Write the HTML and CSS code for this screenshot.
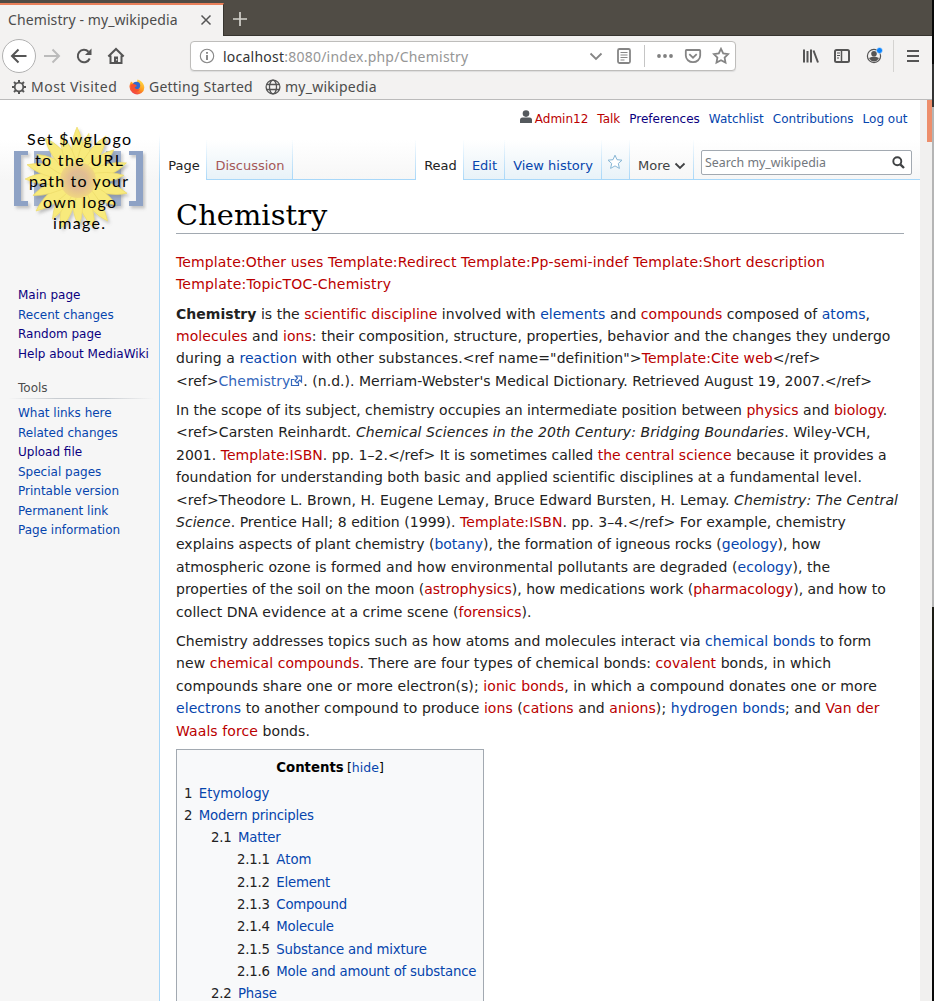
FILE: index.html
```html
<!DOCTYPE html>
<html lang="en">
<head>
<meta charset="utf-8">
<title>Chemistry - my_wikipedia</title>
<link rel="stylesheet" href="styles.css">
</head>
<body>
<div class="desktop">
<div class="window">
  <header class="tabstrip">
    <div class="browser-tab"><span class="tab-title">Chemistry - my_wikipedia</span>
      <svg class="tab-close" width="12" height="12" viewBox="0 0 12 12"><path d="M1.500 1.500l9 9M10.500 1.500l-9 9" stroke="#555" stroke-width="1.500"/></svg>
    </div>
    <svg class="new-tab" width="16" height="16" viewBox="0 0 16 16"><path d="M8 1v14M1 8h14" stroke="#d5d3cd" stroke-width="1.700"/></svg>
  </header>
  <div class="toolbar">
    <span class="back"><svg width="18" height="18" viewBox="0 0 18 18"><path d="M16.500 9H2M8.500 2.500L2 9l6.500 6.500" class="ink w2"/></svg></span>
    <svg class="fwd" width="18" height="18" viewBox="0 0 18 18"><path d="M1 9h15M9.500 2.500L16 9l-6.500 6.500" fill="none" stroke="#bbb" stroke-width="2"/></svg>
    <svg class="reload" width="18" height="18" viewBox="0 0 18 18"><path d="M14.700 11.500A6.200 6.200 0 1 1 13.500 4.800" class="ink w2"/><path d="M16.500 1.500v6.500h-6.500z" fill="#555"/></svg>
    <svg class="home" width="18" height="18" viewBox="0 0 18 18"><path d="M1.300 9.500L9 2l7.700 7.500M3.500 8.500v7.500h11V8.500" class="ink w2"/><path d="M7 9.500h4V16H7z" fill="#555"/><path d="M9.200 12h1v1.500h-1z" fill="#f3f2f1"/></svg>
    <div class="urlbar">
      <svg width="16" height="16" viewBox="0 0 16 16"><circle cx="8" cy="8" r="6.700" fill="none" stroke="#888" stroke-width="1.100"/><path d="M8 7v5M8 4v1.800" stroke="#777" stroke-width="1.700"/></svg>
      <span class="url">localhost<span class="muted">:8080/index.php/Chemistry</span></span>
      <svg width="14" height="14" viewBox="0 0 14 14"><path d="M1.500 4.500L7 10l5.500-5.500" class="pale"/></svg>
      <svg class="reader" width="16" height="18" viewBox="0 0 16 18"><rect x="2" y="2" width="12" height="14" rx="1.500" class="pale"/><path d="M4.500 5.500h7M4.500 8h7M4.500 10.500h7M4.500 13h4" stroke="#888"/></svg>
      <span class="url-sep"></span>
      <svg class="dots" width="18" height="6" viewBox="0 0 18 6"><g fill="#808080"><circle cx="3" cy="3" r="1.900"/><circle cx="9" cy="3" r="1.900"/><circle cx="15" cy="3" r="1.900"/></g></svg>
      <svg class="pocket" width="18" height="16" viewBox="0 0 18 16"><path d="M2.500 2h13q.7 0 .7.700V7.500a7.200 6.700 0 0 1-14.400 0V2.700q0-.7.7-.7z" class="pale"/><path d="M5.300 6.200L9 9.700l3.700-3.500" class="pale"/></svg>
      <svg class="star" width="18" height="18" viewBox="0 0 18 18"><path d="M9 1.800l2.200 4.600 5 .7-3.600 3.500.9 5L9 13.200l-4.500 2.400.9-5L1.800 7.100l5-.7z" class="pale"/></svg>
    </div>
    <svg class="library" width="18" height="16" viewBox="0 0 18 16"><path d="M2 1.500v13M5.500 3v11.500M9 1.500v13M11.500 2.500l4.500 12" class="ink w2"/></svg>
    <svg class="sidebar-icon" width="18" height="16" viewBox="0 0 18 16"><rect x="2" y="2" width="14" height="12" rx="1.500" class="ink w2"/><path d="M8.500 2v12" stroke="#555" stroke-width="1.500"/><path d="M4 5h3M4 7.500h3M4 10h2" stroke="#555"/></svg>
    <svg class="account" width="20" height="20" viewBox="0 0 20 20"><circle cx="9" cy="11" r="6.600" fill="none" stroke="#555" stroke-width="1.200"/><circle cx="9" cy="8.800" r="2.800" fill="#555"/><path d="M4 13q5-2.500 10 0-2 3.500-5 3.500T4 13z" fill="#555"/><circle cx="14.500" cy="5.500" r="3" fill="#0a84ff" stroke="#f3f2f1" stroke-width=".6"/></svg>
    <span class="bar-sep"></span>
    <svg class="menu" width="14" height="14" viewBox="0 0 14 14"><path d="M1 2h12M1 7h12M1 12h12" class="ink w2"/></svg>
  </div>
  <nav class="bookmarks">
    <svg width="16" height="16" viewBox="0 0 16 16"><circle cx="8" cy="8" r="4.300" fill="none" stroke="#555" stroke-width="1.800"/><path d="M8 1v2.500M8 12.500V15M1 8h2.500M12.500 8H15M3 3l1.900 1.900M11.100 11.100L13 13M13 3l-1.900 1.900M4.900 11.100L3 13" stroke="#555" stroke-width="2"/></svg>
    <span class="bm bm-visited">Most Visited</span>
    <svg width="16" height="16" viewBox="0 0 16 16"><defs><linearGradient id="fox" x1=".8" y1="0" x2=".2" y2="1"><stop offset="0" stop-color="#ffe04a"/><stop offset=".5" stop-color="#ff9a1c"/><stop offset="1" stop-color="#ee2a50"/></linearGradient></defs><path d="M2 2.500L4 4Q6 2.500 8 3L8.500.6Q13 2 14.800 6 16.500 11 12.500 14 8 17 3.500 13.800-.8 10 1 5z" fill="url(#fox)"/><circle cx="7.500" cy="6.500" r="3.700" fill="#2d6ad0"/><path d="M1.500 6Q3 4.500 6.500 5.500L8 7 5.500 8.500Q7 11 11 10 9 14 5 12.500 1.500 11 1.500 6z" fill="#f4502f"/></svg>
    <span class="bm bm-start">Getting Started</span>
    <svg width="16" height="16" viewBox="0 0 16 16"><g fill="none" stroke="#555" stroke-width="1.300"><circle cx="8" cy="8" r="6.900"/><ellipse cx="8" cy="8" rx="3.500" ry="6.900"/><path d="M1.700 5.500h12.600M1.700 10.500h12.600"/></g></svg>
    <span class="bm bm-wiki">my_wikipedia</span>
  </nav>
  <div class="viewport">
  <div class="page">
    <aside class="side">
      <svg class="logo" width="135" height="135" viewBox="0 0 135 135">
        <defs>
          <radialGradient id="disc"><stop offset="0" stop-color="#d3c096"/><stop offset=".5" stop-color="#e2bd92"/><stop offset="1" stop-color="#f0d680"/></radialGradient>
          <filter id="shade" x="-20%" y="-20%" width="140%" height="140%"><feDropShadow dx="2" dy="2.500" stdDeviation="1.500" flood-color="#777" flood-opacity=".4"/></filter>
          <path id="petal" d="M66 0Q76 18 70 43H62Q58 16 66 0z"/>
          <path id="petal-short" d="M64 5Q73 20 70 43H62Q58 20 64 5z"/>
        </defs>
        <g fill="#8ea2c5" filter="url(#shade)">
          <path d="M2 38h14v4H9v46h7v5H2zM131 38h-14v4h7v46h-7v5h14z"/>
          <path d="M22 38h17v55H22zM94 38h15v55H94z" opacity=".8"/>
        </g>
        <g filter="url(#shade)"><g fill="#f8ea7c" stroke="#ebd966" stroke-width=".6" transform="translate(-1 14)">
          <circle cx="66" cy="52" r="30" stroke="none"/>
          <use href="#petal"/><use href="#petal-short" transform="rotate(17 66 52)"/><use href="#petal" transform="rotate(34 66 52)"/><use href="#petal-short" transform="rotate(54 66 52)"/><use href="#petal" transform="rotate(72 66 52)"/><use href="#petal-short" transform="rotate(88 66 52)"/><use href="#petal" transform="rotate(106 66 52)"/><use href="#petal-short" transform="rotate(126 66 52)"/><use href="#petal" transform="rotate(144 66 52)"/><use href="#petal" transform="rotate(161 66 52)"/><use href="#petal-short" transform="rotate(180 66 52)"/><use href="#petal" transform="rotate(198 66 52)"/><use href="#petal-short" transform="rotate(214 66 52)"/><use href="#petal" transform="rotate(232 66 52)"/><use href="#petal-short" transform="rotate(252 66 52)"/><use href="#petal" transform="rotate(270 66 52)"/><use href="#petal" transform="rotate(286 66 52)"/><use href="#petal-short" transform="rotate(304 66 52)"/><use href="#petal" transform="rotate(322 66 52)"/><use href="#petal-short" transform="rotate(342 66 52)"/>
        </g></g>
        <circle cx="66" cy="67" r="18" fill="url(#disc)"/>
        <g class="logo-text">
          <text x="15" y="32" textLength="104">Set $wgLogo</text>
          <text x="23" y="53" textLength="88">to the URL</text>
          <text x="17" y="74" textLength="99">path to your</text>
          <text x="31" y="95" textLength="73">own logo</text>
          <text x="41" y="116" textLength="52">image.</text>
        </g>
      </svg>
      <ul class="links">
        <li><a class="visited">Main page</a></li><li><a>Recent changes</a></li><li><a class="visited">Random page</a></li><li><a class="visited">Help about MediaWiki</a></li>
      </ul>
      <h3 class="tools">Tools</h3>
      <ul class="links">
        <li><a>What links here</a></li><li><a>Related changes</a></li><li><a class="visited">Upload file</a></li><li><a>Special pages</a></li><li><a>Printable version</a></li><li><a>Permanent link</a></li><li><a>Page information</a></li>
      </ul>
    </aside>
    <main class="main">
      <div class="personal">
        <svg width="12" height="14" viewBox="0 0 12 14"><circle cx="6" cy="3.600" r="3.300" fill="#54595d"/><path d="M0 13v-3q0-2.500 2.500-2.500h7q2.500 0 2.500 2.500v3z" fill="#54595d"/></svg>
        <a class="new">Admin12</a><a class="new">Talk</a><a class="visited">Preferences</a><a>Watchlist</a><a>Contributions</a><a>Log out</a>
      </div>
      <div class="tabs">
        <span class="tab current t-page">Page</span>
        <a class="tab faded-red t-talk">Discussion</a>
        <span class="tab-fill"></span>
        <span class="tab current t-read">Read</span>
        <a class="tab t-edit">Edit</a>
        <a class="tab t-history">View history</a>
        <span class="tab t-watch"><svg width="16" height="16" viewBox="0 0 16 16"><path d="M8 1.200l2 4.500 5 .5-3.700 3.300 1.100 4.900L8 11.900l-4.400 2.500 1.100-4.900L1 6.200l5-.5z" fill="#fff" stroke="#87b6d5"/></svg></span>
        <span class="tab t-more">More <svg width="12" height="10" viewBox="0 0 12 10"><path d="M1.500 2.500L6 7l4.500-4.500" fill="none" stroke="#404244" stroke-width="1.800"/></svg></span>
        <div class="search-area"><div class="search"><span>Search my_wikipedia</span><svg width="13" height="13" viewBox="0 0 13 13"><circle cx="5.300" cy="5.300" r="4" fill="none" stroke="#404244" stroke-width="1.900"/><path d="M8.300 8.300l3.700 3.700" stroke="#404244" stroke-width="2.400"/></svg></div></div>
      </div>
      <article class="content">
        <h1>Chemistry</h1>
        <p><span class="x13"><a class="new">Template:Other uses</a> <a class="new">Template:Redirect</a> <a class="new">Template:Pp-semi-indef</a> <a class="new">Template:Short description</a></span><br><span class="x20"><a class="new">Template:TopicTOC-Chemistry</a></span></p>
        <p><span class="x3"><b>Chemistry</b> is the <a class="new">scientific discipline</a> involved with <a>elements</a> and <a class="new">compounds</a> composed of <a>atoms</a>,</span><br><span class="x5"><a class="new">molecules</a> and <a class="new">ions</a>: their composition, structure, properties, behavior and the changes they undergo</span><br><span class="x8">during a <a>reaction</a> with other substances.&lt;ref name="definition"&gt;<a class="new">Template:Cite web</a>&lt;/ref&gt;</span><br><span class="x2">&lt;ref&gt;<a class="external">Chemistry<svg width="13" height="12" viewBox="0 0 13 12"><g fill="#fff" stroke="#3366bb" stroke-width="1.200"><path d="M4.500 4.500H1.500v6h7v-3"/><path d="M5.500 1h6v6L9.700 5.200 7 8 5 6 7.500 3z"/></g></svg></a>. (n.d.). Merriam-Webster's Medical Dictionary. Retrieved August 19, 2007.&lt;/ref&gt;</span></p>
        <p>In the scope of its subject, chemistry occupies an intermediate position between <a class="new">physics</a> and <a class="new">biology</a>.<br><span class="x8">&lt;ref&gt;Carsten Reinhardt. <i>Chemical Sciences in the 20th Century: Bridging Boundaries</i>. Wiley-VCH,</span><br><span class="x3">2001. <a class="new">Template:ISBN</a>. pp. 1–2.&lt;/ref&gt; It is sometimes called <a class="new">the central science</a> because it provides a</span><br><span class="x5">foundation for understanding both basic and applied scientific disciplines at a fundamental level.</span><br><span class="x8">&lt;ref&gt;Theodore L. Brown, H. Eugene Lemay, Bruce Edward Bursten, H. Lemay. <i>Chemistry: The Central</i></span><br><span class="x5"><i>Science</i>. Prentice Hall; 8 edition (1999). <a class="new">Template:ISBN</a>. pp. 3–4.&lt;/ref&gt; For example, chemistry</span><br>explains aspects of plant chemistry (<a>botany</a>), the formation of igneous rocks (<a>geology</a>), how<br><span class="x6">atmospheric ozone is formed and how environmental pollutants are degraded (<a>ecology</a>), the</span><br>properties of the soil on the moon (<a class="new">astrophysics</a>), how medications work (<a class="new">pharmacology</a>), and how to<br><span class="x6">collect DNA evidence at a crime scene (<a class="new">forensics</a>).</span></p>
        <p><span class="x3">Chemistry addresses topics such as how atoms and molecules interact via <a>chemical bonds</a> to form</span><br><span class="x7">new <a class="new">chemical compounds</a>. There are four types of chemical bonds: <a class="new">covalent</a> bonds, in which</span><br><span class="x9">compounds share one or more electron(s); <a class="new">ionic bonds</a>, in which a compound donates one or more</span><br><span class="x7"><a>electrons</a> to another compound to produce <a class="new">ions</a> (<a class="new">cations</a> and <a class="new">anions</a>); <a>hydrogen bonds</a>; and <a class="new">Van der</a></span><br><span class="x9"><a class="new">Waals force</a> bonds.</span></p>
        <div class="toc">
          <div class="toc-title"><b>Contents</b> <small>[<a>hide</a>]</small></div>
          <ul>
            <li><span>1</span><a class="x0">Etymology</a></li>
            <li><span>2</span><a>Modern principles</a></li>
            <li class="l2"><span>2.1</span><a>Matter</a></li>
            <li class="l3"><span>2.1.1</span><a class="x0">Atom</a></li>
            <li class="l3"><span>2.1.2</span><a>Element</a></li>
            <li class="l3"><span>2.1.3</span><a>Compound</a></li>
            <li class="l3"><span>2.1.4</span><a>Molecule</a></li>
            <li class="l3"><span>2.1.5</span><a>Substance and mixture</a></li>
            <li class="l3"><span>2.1.6</span><a>Mole and amount of substance</a></li>
            <li class="l2"><span>2.2</span><a>Phase</a></li>
          </ul>
        </div>
      </article>
    </main>
  </div>
  <div class="scrollbar"><div class="thumb"></div></div>
  </div>
</div>
<div class="behind"></div>
</div>
</body>
</html>
```
FILE: styles.css
```css
* { box-sizing: border-box; }
body { margin: 0; font-family: "DejaVu Sans", sans-serif; color: #222; overflow: hidden; }
svg { display: block; flex: none; }
ul { list-style: none; margin: 0; padding: 0; }
a { color: #0645ad; }
a.visited { color: #0b0080; }
a.new { color: #ba0000; }
.desktop { display: flex; width: 934px; height: 1001px; overflow: hidden; }
.window { width: 932px; display: flex; flex-direction: column; background: #f3f2f1; }
.behind { width: 2px; background: linear-gradient(#080808 0 64px, #333 64px 107px, #b5b5b5 107px 607px, #1b1b14 607px 680px, #080808 680px); }
.ink { fill: none; stroke: #555; }
.w2 { stroke-width: 2; }
.pale { fill: none; stroke: #858585; stroke-width: 1.8; }

/* Browser chrome */
.tabstrip { height: 36px; flex: none; display: flex; align-items: flex-end; background: #504c45; border-bottom: 1px solid #36342f; font-family: "Noto Sans", sans-serif; }
.browser-tab { width: 224px; height: 33px; margin-bottom: -1px; display: flex; align-items: center; background: #f3f2f1; border-top: 2px solid #e9805a; border-right: 1px solid #36342f; padding: 0 11px 2px 8px; font-size: 14px; color: #4c4c4c; white-space: nowrap; }
.tab-title { letter-spacing: .1px; }
.tab-close { margin-left: auto; }
.new-tab { margin: 0 0 8px 8px; }
.toolbar { height: 40px; flex: none; display: flex; align-items: center; font-family: "Noto Sans", sans-serif; }
.back { width: 34px; height: 34px; margin-left: 2px; border: 1px solid #b1b1b1; border-radius: 50%; background: #fff; display: flex; align-items: center; justify-content: center; }
.fwd { margin-left: 7px; }
.reload { margin-left: 14px; }
.home { margin-left: 14px; }
.urlbar { width: 546px; height: 30px; margin-left: 65px; padding: 0 5px 0 8px; display: flex; align-items: center; background: #fff; border: 1px solid #bebdbb; border-radius: 4px; box-shadow: 0 1px 1px #ddd; }
.url { flex: 1; padding-left: 8px; font-size: 14px; letter-spacing: .23px; color: #333; white-space: nowrap; }
.muted { color: #969696; }
.reader { margin-left: 13px; }
.url-sep { width: 1px; height: 22px; margin: 0 11px 0 12px; background: #c5c5c5; }
.pocket { margin-left: 10px; }
.star { margin-left: 10px; }
.library { margin-left: 66px; }
.sidebar-icon { margin-left: 13px; }
.account { margin-left: 14px; margin-top: -2px; }
.bar-sep { width: 1px; height: 32px; margin-left: 8px; background: #d4d3d1; }
.menu { margin-left: 12px; }
.bookmarks { height: 24px; flex: none; display: flex; align-items: center; padding: 0 0 1px 11px; border-bottom: 1px solid #bbb; font: 14px/20px "Noto Sans", sans-serif; color: #4c4c4c; white-space: nowrap; }
.bm { margin-left: 4px; }
.bm-visited { width: 98px; letter-spacing: .48px; }
.bm-start { width: 116px; letter-spacing: .22px; }
.bm-wiki { letter-spacing: .25px; }

/* Wiki skin */
.viewport { flex: 1; min-height: 0; display: flex; }
.page { width: 920px; display: flex; background: linear-gradient(#fff 0 40px, #f6f6f6 80px); }
.scrollbar { width: 12px; padding-left: 7px; background: #f1f0ef; }
.thumb { height: 42px; background: #ed8e6b; }
.side { width: 159px; padding: 13px 11px 0 0; }
.logo { margin: 0 0 38px 12px; }
.logo-text { font: 16px Lato, sans-serif; fill: #000; }
.links { padding-left: 18px; font-size: 12px; line-height: 19.5px; white-space: nowrap; }
.tools { margin: 15px -5px 5px 9px; padding: 0 0 0 9px; height: 20px; font-size: 12px; line-height: 18px; font-weight: 400; color: #4d4d4d; border-bottom: 1px solid; border-image: linear-gradient(90deg, transparent, #c8ccd1 33%, #c8ccd1 66%, transparent) 1; }
.main { width: 761px; flex: none; border-left: 1px solid #a7d7f9; border-image: linear-gradient(transparent 35px, #a7d7f9 80px) 0 0 0 1; display: flex; flex-direction: column; }
.personal { height: 40px; flex: none; display: flex; justify-content: flex-end; align-items: flex-start; padding: 10px 12.5px 0 0; font-size: 12px; line-height: 18px; white-space: nowrap; }
.personal a + a { margin-left: 9px; }
.personal svg { margin-right: 3px; }
.tabs { height: 40px; flex: none; display: flex; font-size: 13px; white-space: nowrap; }
.tab { padding: 16px 0 0 1px; line-height: 20px; text-align: center; border-right: 1px solid; border-bottom: 1px solid #a7d7f9; border-image: linear-gradient(rgba(167,215,249,0), #a7d7f9) 1; background: linear-gradient(#fff, #e8f2f8); }
.tab.current { background: #fff; border-bottom: 0; padding-left: 2px; }
.faded-red { color: #a55858; }
.t-page { width: 47px; } .t-talk { width: 86px; } .tab-fill { width: 123px; border-right: 1px solid; border-bottom: 1px solid; border-image: linear-gradient(rgba(167,215,249,0), #a7d7f9) 1; }
.t-read { width: 48px; } .t-edit { width: 41px; } .t-history { width: 97px; padding-left: 0; }
.t-watch { width: 28px; padding: 14px 0 0 5px; }
.t-more { width: 64px; display: flex; align-items: flex-start; gap: 4px; padding-left: 8px; color: #404244; background: linear-gradient(#fff, #f6f6f6); }
.t-more svg { margin-top: 5px; }
.search-area { flex: 1; padding: 10px 8px 0 7px; border-bottom: 1px solid #a7d7f9; }
.search { height: 25px; display: flex; align-items: center; justify-content: space-between; padding: 0 6px 1px 3px; background: #fff; border: 1px solid #a2a9b1; border-radius: 2px; font: 12.4px "Noto Sans", sans-serif; color: #72777d; }
.content { flex: 1; min-height: 0; padding: 16px 16px 0; background: #fff; font-size: 14px; line-height: 22.4px; white-space: nowrap; overflow: hidden; }
h1 { margin: 0 0 17px; height: 38px; border-bottom: 1px solid #a2a9b1; font: 28.8px/39px "DejaVu Serif", serif; letter-spacing: .1px; color: #000; }
.content p { margin: 0 0 6.8px; }
.external { color: #36b; }
.external svg { display: inline; margin-left: 0; vertical-align: -1px; }
.toc { width: 308px; margin-top: 7px; padding: 6px 7px; background: #f8f9fa; border: 1px solid #a2a9b1; font-size: 13.3px; }
.toc-title { text-align: center; color: #000; line-height: 23px; }
.toc small { font-size: 12.5px; margin-left: -1px; }
.toc ul { margin-top: 3.6px; line-height: 22.3px; letter-spacing: -.2px; }
.toc li { display: flex; gap: 6.5px; }
.l2 { padding-left: 27px; }
.l3 { padding-left: 53px; }

/* Tracking steps, in hundredths of a pixel */
.x0 { letter-spacing: 0; }
.x2 { letter-spacing: .02px; }
.x3 { letter-spacing: .03px; }
.x5 { letter-spacing: .05px; }
.x6 { letter-spacing: .06px; }
.x7 { letter-spacing: .07px; }
.x8 { letter-spacing: .08px; }
.x9 { letter-spacing: .09px; }
.x13 { letter-spacing: .13px; }
.x20 { letter-spacing: .2px; }
```
